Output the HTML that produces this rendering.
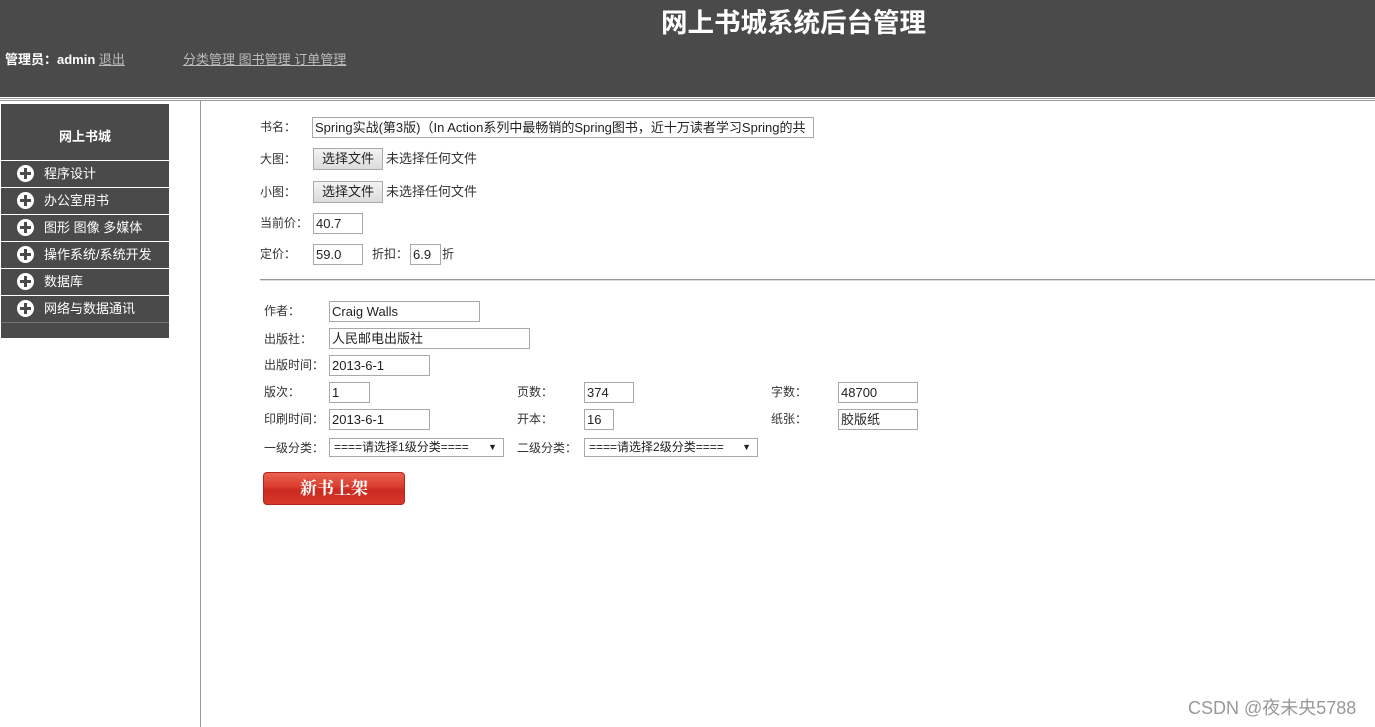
<!DOCTYPE html>
<html><head><meta charset="utf-8"><style>
*{margin:0;padding:0;box-sizing:border-box}
body{width:1375px;height:727px;background:#fff;position:relative;overflow:hidden;font-family:"Liberation Sans","Noto Sans CJK SC",sans-serif;font-size:13px;color:#333}
.a{position:absolute;white-space:nowrap}
#hd{position:absolute;left:0;top:0;width:1375px;height:97px;background:#4b4a4a}
.ln{position:absolute;left:0;width:1375px;height:1px;background:#9a9a9a}
#sb{position:absolute;left:1px;top:104px;width:168px;height:234px;background:#4b4a4a}
.it{position:absolute;left:1px;width:168px;height:26px;background:#4b4a4a;border-top:1px solid #fff;color:#fff;font-size:13px;line-height:25px;padding-left:43px}
.ic{position:absolute;left:16px;top:4px;width:17px;height:17px;border-radius:50%;background:#fff}
.ic:before{content:"";position:absolute;left:3px;top:7px;width:11px;height:3px;background:#4b4a4a}
.ic:after{content:"";position:absolute;left:7px;top:3px;width:3px;height:11px;background:#4b4a4a}
.in{position:absolute;border:1px solid #a9a9a9;background:#fff;font-size:13px;padding-left:2px;line-height:19px;height:21px;color:#222;overflow:hidden;white-space:nowrap}
.bt{position:absolute;border:1px solid #aaa;background:linear-gradient(#f3f3f3,#dcdcdc);font-size:13px;line-height:20px;text-align:center;height:22px;width:70px;color:#222}
.lb{position:absolute;font-size:12px;color:#333;white-space:nowrap;line-height:16px}
.sel{position:absolute;border:1px solid #a9a9a9;background:#fff;height:19px;font-size:12px;line-height:17px;padding-left:4px;color:#222;white-space:nowrap}
</style></head><body>
<div id="hd"></div>
<div class="a" style="left:661px;top:5px;font-size:26.5px;font-weight:bold;color:#fff;line-height:36px">网上书城系统后台管理</div>
<div class="a" style="left:5px;top:51px;color:#fff;font-size:13px;line-height:18px"><b style="font-weight:bold">管理员：admin</b> <span style="color:#bbb;text-decoration:underline">退出</span></div>
<div class="a" style="left:183px;top:51px;color:#bbb;font-size:13px;line-height:18px;text-decoration:underline">分类管理 图书管理 订单管理</div>
<div class="ln" style="top:98px"></div>
<div class="ln" style="top:100px"></div>
<div style="position:absolute;left:200px;top:101px;width:1px;height:626px;background:#999"></div>
<div id="sb"></div>
<div class="a" style="left:1px;width:168px;text-align:center;top:126px;color:#fff;font-weight:bold;font-size:13px">网上书城</div>
<div class="it" style="top:160px"><span class="ic"></span>程序设计</div>
<div class="it" style="top:187px"><span class="ic"></span>办公室用书</div>
<div class="it" style="top:214px"><span class="ic"></span>图形 图像 多媒体</div>
<div class="it" style="top:241px"><span class="ic"></span>操作系统/系统开发</div>
<div class="it" style="top:268px"><span class="ic"></span>数据库</div>
<div class="it" style="top:295px"><span class="ic"></span>网络与数据通讯</div>
<div style="position:absolute;left:1px;top:322px;width:168px;height:1px;background:#777"></div>

<div class="lb" style="left:260px;top:119px">书名：</div>
<div class="in" style="left:312px;top:117px;width:502px">Spring实战(第3版)（In Action系列中最畅销的Spring图书，近十万读者学习Spring的共</div>
<div class="lb" style="left:260px;top:151px">大图：</div>
<div class="bt" style="left:313px;top:148px">选择文件</div>
<div class="lb" style="left:386px;top:151px;font-size:13px">未选择任何文件</div>
<div class="lb" style="left:260px;top:184px">小图：</div>
<div class="bt" style="left:313px;top:181px">选择文件</div>
<div class="lb" style="left:386px;top:184px;font-size:13px">未选择任何文件</div>
<div class="lb" style="left:260px;top:215px">当前价：</div>
<div class="in" style="left:313px;top:213px;width:50px">40.7</div>
<div class="lb" style="left:260px;top:246px">定价：</div>
<div class="in" style="left:313px;top:244px;width:50px">59.0</div>
<div class="lb" style="left:372px;top:246px">折扣：</div>
<div class="in" style="left:410px;top:244px;width:31px">6.9</div>
<div class="lb" style="left:442px;top:246px">折</div>
<div style="position:absolute;left:260px;top:279px;width:1115px;height:2px;border-top:1px solid #999;border-bottom:1px solid #ddd"></div>

<div class="lb" style="left:264px;top:303px">作者：</div>
<div class="in" style="left:329px;top:301px;width:151px">Craig Walls</div>
<div class="lb" style="left:264px;top:331px">出版社：</div>
<div class="in" style="left:329px;top:328px;width:201px">人民邮电出版社</div>
<div class="lb" style="left:264px;top:357px">出版时间：</div>
<div class="in" style="left:329px;top:355px;width:101px">2013-6-1</div>
<div class="lb" style="left:264px;top:384px">版次：</div>
<div class="in" style="left:329px;top:382px;width:41px">1</div>
<div class="lb" style="left:517px;top:384px">页数：</div>
<div class="in" style="left:584px;top:382px;width:50px">374</div>
<div class="lb" style="left:771px;top:384px">字数：</div>
<div class="in" style="left:838px;top:382px;width:80px">48700</div>
<div class="lb" style="left:264px;top:411px">印刷时间：</div>
<div class="in" style="left:329px;top:409px;width:101px">2013-6-1</div>
<div class="lb" style="left:517px;top:411px">开本：</div>
<div class="in" style="left:584px;top:409px;width:30px">16</div>
<div class="lb" style="left:771px;top:411px">纸张：</div>
<div class="in" style="left:838px;top:409px;width:80px">胶版纸</div>
<div class="lb" style="left:264px;top:440px">一级分类：</div>
<div class="sel" style="left:329px;top:438px;width:175px">====请选择1级分类==== <span style="position:absolute;right:6px;font-size:9px">▼</span></div>
<div class="lb" style="left:517px;top:440px">二级分类：</div>
<div class="sel" style="left:584px;top:438px;width:174px">====请选择2级分类==== <span style="position:absolute;right:6px;font-size:9px">▼</span></div>
<div style="position:absolute;left:263px;top:472px;width:142px;height:33px;border-radius:4px;border:1px solid #b3261e;background:linear-gradient(#e8634f 0%,#dc3b2d 45%,#c92a20 55%,#d8372a 100%);color:#fff;font-family:'Liberation Serif','Noto Serif CJK SC',serif;font-weight:bold;font-size:17px;line-height:31px;text-align:center">新书上架</div>
<div class="a" style="left:1188px;top:697px;font-size:18px;color:#999;line-height:22px">CSDN @夜未央5788</div>
</body></html>
